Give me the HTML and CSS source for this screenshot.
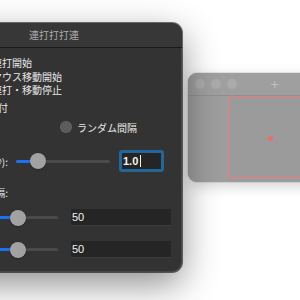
FILE: index.html
```html
<!DOCTYPE html>
<html lang="ja">
<head>
<meta charset="utf-8">
<title>連打打打連</title>
<link rel="stylesheet" href="styles.css">
</head>
<body>
<div class="desktop">
  <div class="window canvas-window">
    <div class="cw-titlebar">
      <span class="light"></span><span class="light"></span><span class="light"></span>
      <span class="plus">+</span>
    </div>
    <div class="cw-body">
      <div class="cw-side"></div>
      <div class="cw-area">
        <div class="area-rect"><span class="dot"></span></div>
      </div>
    </div>
  </div>

  <div class="window panel">
    <div class="titlebar">連打打打連</div>
    <div class="panel-body">
      <div class="hotkeys">
        <div>連打開始</div>
        <div>マウス移動開始</div>
        <div>連打・移動停止</div>
      </div>
      <div class="label-line"><span class="label">位置固定付</span></div>
      <div class="radio-row"><span class="radio"></span><span>ランダム間隔</span></div>
      <div class="row row-interval">
        <span class="label">間隔(秒):</span>
        <div class="slider slider-interval" style="--v:0.18"><div class="fill"></div><div class="thumb"></div></div>
        <div class="field focused">1.0<span class="caret"></span></div>
      </div>
      <div class="label-line label-gap"><span class="label">移動範囲間隔:</span></div>
      <div class="row row-range">
        <span class="label short">X:</span>
        <div class="slider slider-range" style="--v:0.5"><div class="fill"></div><div class="thumb"></div></div>
        <div class="field wide">50</div>
      </div>
      <div class="row row-range row-y">
        <span class="label short">Y:</span>
        <div class="slider slider-range" style="--v:0.5"><div class="fill"></div><div class="thumb"></div></div>
        <div class="field wide">50</div>
      </div>
    </div>
  </div>
</div>
</body>
</html>
```

FILE: styles.css
```css
html, body {
  margin: 0;
  padding: 0;
  width: 300px;
  height: 300px;
  overflow: hidden;
  background: #ffffff;
}

.desktop {
  position: relative;
  width: 300px;
  height: 300px;
  overflow: hidden;
  font-family: "Noto Sans CJK JP", "Noto Sans", sans-serif;
}

.window {
  position: absolute;
  box-sizing: border-box;
}

/* ---------- light canvas window (behind) ---------- */
.canvas-window {
  left: 188px;
  top: 73px;
  width: 140px;
  height: 109px;
  border-radius: 9px;
  background: #9b9b9b;
  box-shadow: 0 0 0 1px rgba(0,0,0,0.08), 0 4px 14px rgba(0,0,0,0.18);
  display: flex;
  flex-direction: column;
  overflow: hidden;
}

.cw-titlebar {
  height: 22px;
  flex: none;
  display: flex;
  align-items: center;
  gap: 6px;
  padding-left: 7px;
  background: #9f9f9f;
  border-bottom: 1px solid #8f8f8f;
}

.light {
  width: 10px;
  height: 10px;
  border-radius: 50%;
  background: #ababab;
}

.plus {
  margin-left: 27px;
  color: #c2c2c2;
  font-family: "DejaVu Sans", sans-serif;
  font-size: 11px;
  line-height: 1;
}

.cw-body {
  flex: 1;
  display: flex;
}

.cw-side {
  width: 41px;
  flex: none;
  background: #9d9d9d;
}

.cw-area {
  flex: 1;
  padding: 1px 0 4px 0;
  display: flex;
}

.area-rect {
  flex: 1;
  position: relative;
  border: 1.5px solid #ea7d7d;
  border-right: none;
}

.dot {
  position: absolute;
  left: 38px;
  top: 38px;
  width: 5px;
  height: 5px;
  border-radius: 50%;
  background: #f06c6c;
}

/* ---------- dark panel window ---------- */
.panel {
  left: -74px;
  top: 23px;
  width: 256px;
  height: 249px;
  border-radius: 10px;
  background: #333333;
  box-shadow: 0 0 0 1px rgba(0,0,0,0.55), inset 0 0 0 1px rgba(255,255,255,0.10), 0 12px 36px rgba(0,0,0,0.45);
  color: #e9e9e9;
  font-size: 10px;
  overflow: hidden;
}

.titlebar {
  height: 24px;
  line-height: 24px;
  text-align: center;
  color: #ababab;
  font-size: 10px;
  background: #373737;
  border-bottom: 1px solid #1b1b1b;
}

.panel-body {
  padding-top: 8px;
}

.hotkeys {
  padding-left: 66px;
  line-height: 13.5px;
}

.label-line {
  margin-top: 4px;
  line-height: 13.5px;
}

.label {
  display: inline-block;
  width: 82px;
  text-align: right;
  white-space: nowrap;
}

.label-gap {
  margin-top: 14px;
}

.radio-row {
  margin-top: 5px;
  height: 16px;
  display: flex;
  align-items: center;
  gap: 5px;
  padding-left: 134px;
}

.radio {
  width: 12px;
  height: 12px;
  border-radius: 50%;
  background: #5c5c5c;
  box-shadow: inset 0 0 0 0.5px rgba(255,255,255,0.08);
}

.row {
  display: flex;
  align-items: center;
}

.row-interval {
  margin-top: 15px;
  height: 22px;
}

.row-interval .label {
  margin-right: 8px;
}

.row-range {
  margin-top: 9px;
  height: 18px;
}

.row-y {
  margin-top: 14px;
}

.row-range .label.short {
  width: 43px;
  margin-right: 8px;
}

/* sliders */
.slider {
  position: relative;
  height: 16px;
  flex: none;
}

.slider::before {
  content: "";
  position: absolute;
  left: 0;
  right: 0;
  top: 6.5px;
  height: 3px;
  border-radius: 2px;
  background: #4a4a4a;
}

.fill {
  position: absolute;
  left: 0;
  top: 6.5px;
  height: 3px;
  border-radius: 2px;
  background: #1f6ff2;
  width: calc(var(--v) * (100% - 16px) + 8px);
}

.thumb {
  position: absolute;
  top: 0;
  left: calc(var(--v) * (100% - 16px));
  width: 16px;
  height: 16px;
  border-radius: 50%;
  background: #a2a2a2;
  box-shadow: 0 0.5px 1.5px rgba(0,0,0,0.5);
}

.slider-interval {
  width: 94px;
}

.slider-range {
  width: 81px;
}

/* text fields */
.field {
  box-sizing: border-box;
  font-family: "Liberation Sans", "Noto Sans", sans-serif;
  color: #f2f2f2;
  background: #252525;
  display: flex;
  align-items: center;
  white-space: nowrap;
}

.field.focused {
  margin-left: 9px;
  width: 45px;
  height: 22px;
  border: 3px solid #22679b;
  border-radius: 3px;
  padding-left: 1px;
  font-size: 11px;
  font-weight: bold;
}

.caret {
  display: inline-block;
  width: 1px;
  height: 12px;
  margin-left: 1.5px;
  background: #f2f2f2;
}

.field.wide {
  margin-left: 13px;
  width: 100px;
  height: 17px;
  padding-left: 1px;
  font-size: 11px;
  border-bottom: 1px solid #3d3d3d;
}
```
